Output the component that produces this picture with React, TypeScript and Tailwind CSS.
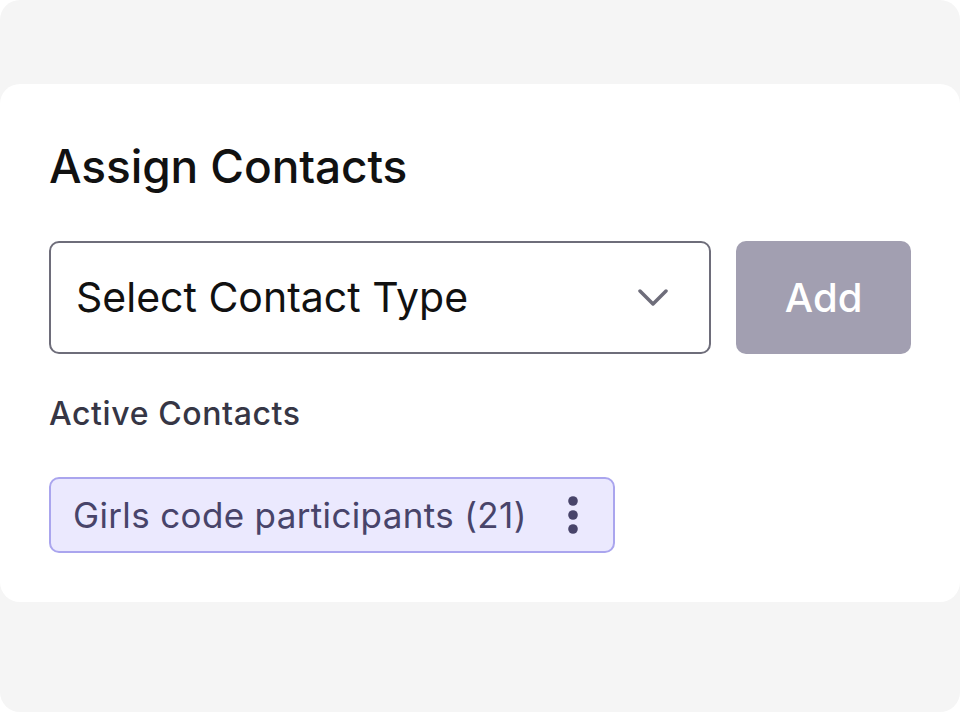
export default function App() {
  return (
    <div className="h-[714px] w-[960px] bg-white font-['Inter',sans-serif]">
      <div className="h-[712px] rounded-[20px] bg-[#f5f5f5] pt-[84px]">
        <div className="h-[518px] rounded-[20px] bg-white px-[49px] pt-[52px]">
          <h1 className="text-[46px] leading-[60px] font-medium tracking-[-0.1px] text-[#111111]">Assign Contacts</h1>
          <div className="mt-[45px] flex gap-[25px]">
            <button className="flex h-[113px] w-[663px] items-center justify-between rounded-[10px] border-2 border-[#6e6d7a] pr-[41px] pl-[25px] text-[41px] text-[#111111]">
              Select Contact Type
              <svg width="30" height="18" viewBox="0 0 30 18" fill="none" stroke="#6e6d7a" strokeWidth="3.5" strokeLinecap="round" strokeLinejoin="round">
                <polyline points="2,2 15,15 28,2" />
              </svg>
            </button>
            <button className="h-[113px] w-[175px] rounded-[10px] bg-[#a29fb1] text-[40px] font-medium text-white">Add</button>
          </div>
          <p className="mt-[38px] text-[32px] leading-[44px] font-medium tracking-[0.6px] text-[#363645]">Active Contacts</p>
          <div className="mt-[41px] inline-flex h-[76px] items-center gap-[41px] rounded-[10px] border-2 border-[#aaa5ee] bg-[#ebe9fe] pr-[35px] pl-[22px] text-[35px] tracking-[0.35px] text-[#48446a]">
            <span>Girls code participants (21)</span>
            <svg width="10" height="38" viewBox="0 0 10 38" className="fill-[#48446a]">
              <circle cx="5" cy="5" r="4.8" />
              <circle cx="5" cy="19" r="4.8" />
              <circle cx="5" cy="33" r="4.8" />
            </svg>
          </div>
        </div>
      </div>
    </div>
  );
}
